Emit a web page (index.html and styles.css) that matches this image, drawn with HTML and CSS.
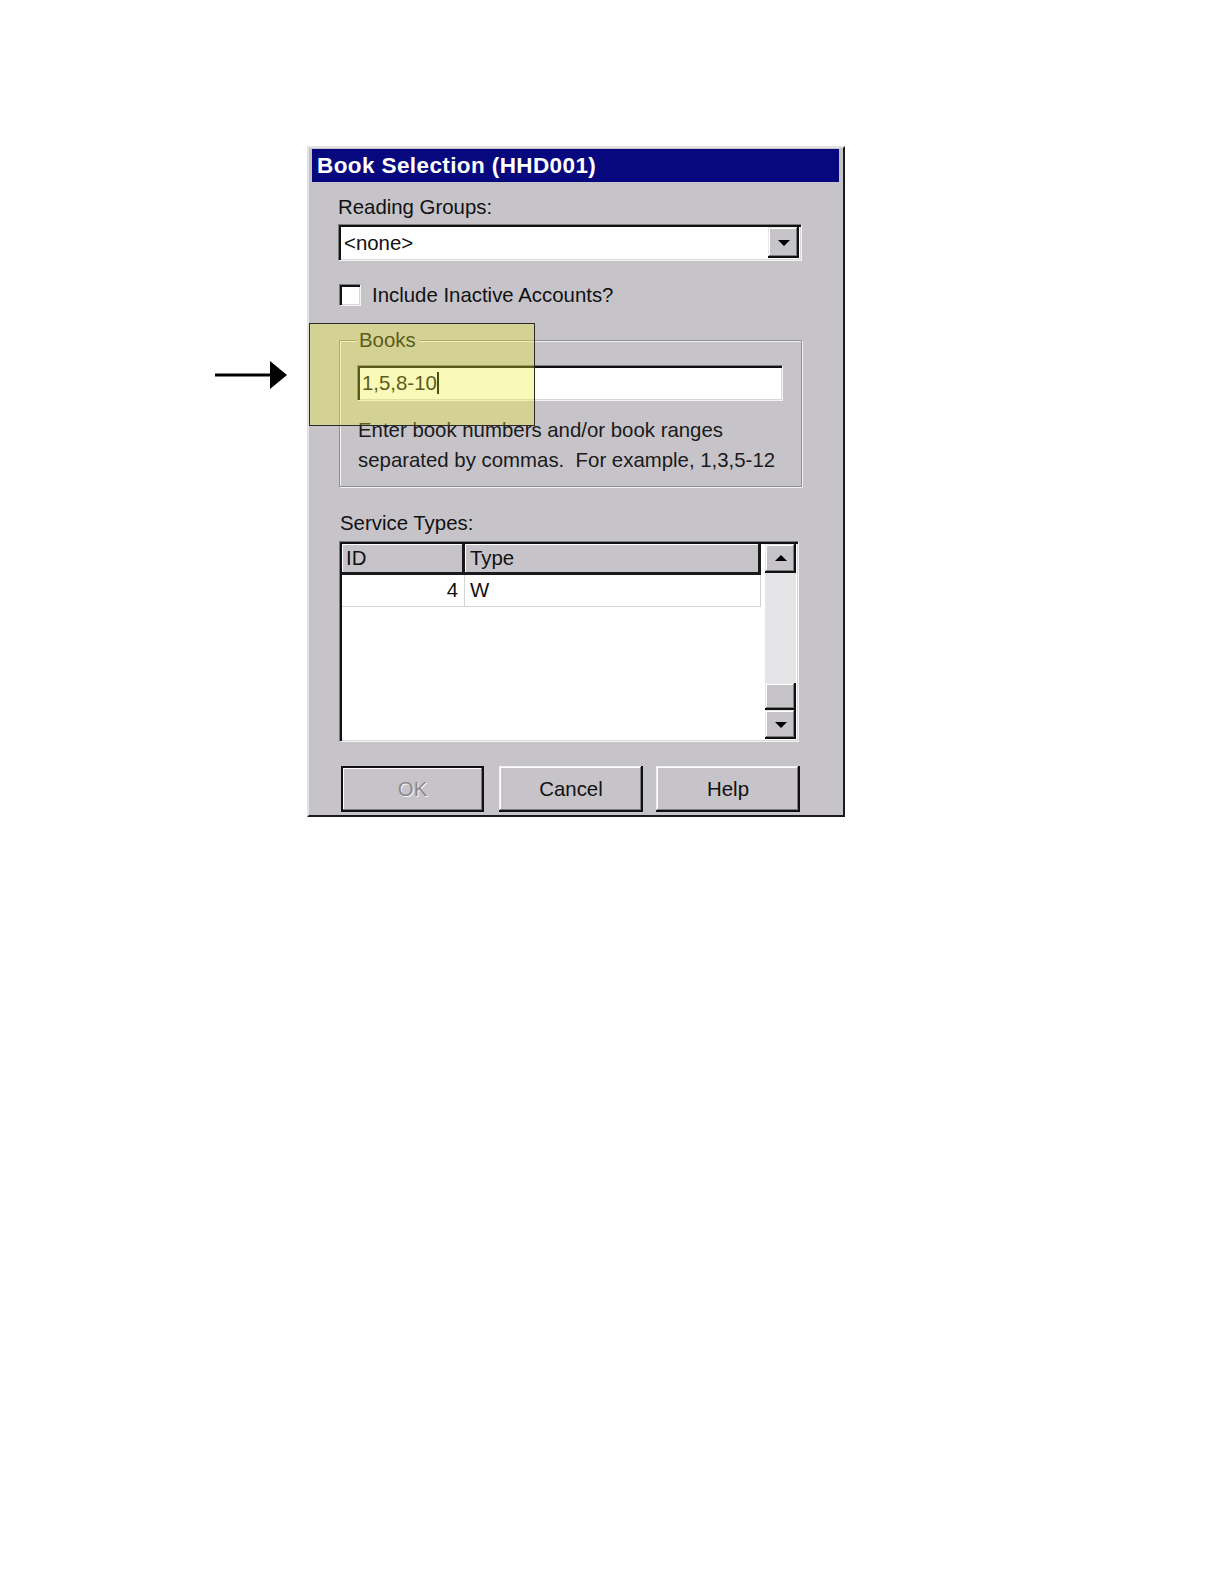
FILE: index.html
```html
<!DOCTYPE html>
<html>
<head>
<meta charset="utf-8">
<title>Book Selection</title>
<link rel="stylesheet" href="styles.css">
</head>
<body>
<div class="page">
  <div class="dialog">
    <div class="titlebar">Book Selection (HHD001)</div>
    <div class="content">
      <div class="label">Reading Groups:</div>
      <div class="combo">
        <span class="combo-text">&lt;none&gt;</span>
        <span class="combo-btn"><span class="tri-down"></span></span>
      </div>
      <div class="check-row">
        <span class="checkbox"></span>
        <span class="check-label">Include Inactive Accounts?</span>
      </div>
      <fieldset class="group">
        <legend class="legend">Books</legend>
        <div class="textbox"><span>1,5,8-10</span><span class="caret"></span></div>
        <p class="help">Enter book numbers and/or book ranges<br>separated by commas.&nbsp; For example, 1,3,5-12</p>
      </fieldset>
      <div class="label label-service">Service Types:</div>
      <div class="listbox">
        <div class="list-main">
          <div class="list-header">
            <div class="hcell hcell-id">ID</div>
            <div class="hcell hcell-type">Type</div>
          </div>
          <div class="list-row">
            <div class="cell cell-id">4</div>
            <div class="cell cell-type">W</div>
          </div>
        </div>
        <div class="scrollbar">
          <div class="sb-btn"><span class="tri-up"></span></div>
          <div class="sb-track"></div>
          <div class="sb-thumb"></div>
          <div class="sb-btn"><span class="tri-down"></span></div>
        </div>
      </div>
      <div class="buttons">
        <div class="btn btn-default"><span class="btn-inner disabled">OK</span></div>
        <div class="btn btn-cancel"><span class="btn-inner">Cancel</span></div>
        <div class="btn btn-help"><span class="btn-inner">Help</span></div>
      </div>
    </div>
  </div>

  <svg class="arrow" width="75" height="30" viewBox="0 0 75 30">
    <rect x="0" y="13.5" width="59" height="3" fill="#000"/>
    <polygon points="55,1 72,15 55,29" fill="#000"/>
  </svg>
  <div class="highlight"></div>
</div>
</body>
</html>
```

FILE: styles.css
```css
html, body {
  margin: 0;
  padding: 0;
  background: #ffffff;
}

.page {
  position: relative;
  width: 1224px;
  height: 1584px;
  box-sizing: border-box;
  padding: 146px 0 0 307px;
  font-family: "Liberation Sans", Arial, sans-serif;
  font-size: 20.4px;
  color: #111;
  overflow: hidden;
}

.dialog {
  width: 538px;
  box-sizing: border-box;
  background: #c7c4c9;
  border-top: 2px solid #e4e2e6;
  border-left: 2px solid #e4e2e6;
  border-right: 2px solid #1a1a1a;
  border-bottom: 2px solid #1a1a1a;
  padding: 1px 4px 3px 3px;
}

.titlebar {
  height: 33px;
  line-height: 33px;
  background: #08087e;
  color: #fff;
  font-weight: bold;
  font-size: 22.5px;
  letter-spacing: 0.4px;
  padding-left: 5px;
  white-space: nowrap;
}

.content {
  display: flex;
  flex-direction: column;
  padding: 0 37px 0 26px;
}

.label {
  margin-top: 14px;
  height: 22px;
  line-height: 22px;
  white-space: nowrap;
}

/* combo box */
.combo {
  margin-top: 6px;
  height: 37px;
  box-sizing: border-box;
  background: #fff;
  border: 1px solid;
  border-color: #7c7c7c #f4f4f4 #f4f4f4 #7c7c7c;
  box-shadow: inset 2px 2px 0 #111, inset -1px -1px 0 #d8d8d8;
  display: flex;
  align-items: center;
  justify-content: space-between;
  padding: 2px 2px 2px 5px;
}

.combo-text {
  line-height: 22px;
}

.combo-btn {
  width: 31px;
  height: 31px;
  box-sizing: border-box;
  background: #c7c4c9;
  box-shadow: inset -2px -2px 0 #111, inset 1px 1px 0 #e8e8e8, inset -3px -3px 0 #7c7c7c, inset 2px 2px 0 #fff;
  display: flex;
  align-items: center;
  justify-content: center;
}

.tri-down {
  width: 0;
  height: 0;
  border-left: 6px solid transparent;
  border-right: 6px solid transparent;
  border-top: 6px solid #000;
}

.tri-up {
  width: 0;
  height: 0;
  border-left: 6px solid transparent;
  border-right: 6px solid transparent;
  border-bottom: 6px solid #000;
}

/* checkbox */
.check-row {
  margin-top: 23px;
  margin-left: 1px;
  height: 22px;
  display: flex;
  align-items: center;
}

.checkbox {
  width: 22px;
  height: 22px;
  box-sizing: border-box;
  background: #fff;
  border: 1px solid;
  border-color: #7c7c7c #f4f4f4 #f4f4f4 #7c7c7c;
  box-shadow: inset 2px 2px 0 #111, inset -1px -1px 0 #d8d8d8;
}

.check-label {
  margin-left: 11px;
  line-height: 22px;
  white-space: nowrap;
}

/* group box */
.group {
  margin: 23px 0 0 1px;
  padding: 14px 17px 11px 17px;
  border: 1px solid #8e8e8e;
  box-shadow: inset 1px 1px 0 #f2f2f2, 1px 1px 0 #f2f2f2;
  min-width: 0;
}

.legend {
  padding: 0 3px 0 2px;
  line-height: 22px;
  background: #c7c4c9;
}

.textbox {
  height: 36px;
  width: 426px;
  box-sizing: border-box;
  background: #fff;
  border: 1px solid;
  border-color: #7c7c7c #f4f4f4 #f4f4f4 #7c7c7c;
  box-shadow: inset 2px 2px 0 #111, inset -1px -1px 0 #d8d8d8;
  display: flex;
  align-items: center;
  padding-left: 4px;
}

.caret {
  display: inline-block;
  width: 2px;
  height: 22px;
  background: #000;
}

.help {
  margin: 15px 0 0 1px;
  line-height: 29.5px;
  white-space: nowrap;
  color: #1a1a1a;
}

.label-service {
  margin-top: 25px;
  margin-left: 2px;
}

/* list view */
.listbox {
  margin: 7px 0 0 1px;
  width: 460px;
  height: 201px;
  box-sizing: border-box;
  background: #fff;
  border: 1px solid;
  border-color: #7c7c7c #f4f4f4 #f4f4f4 #7c7c7c;
  box-shadow: inset 2px 2px 0 #111, inset -1px -1px 0 #d8d8d8;
  padding: 2px;
  display: flex;
}

.list-main {
  flex: 1;
  display: flex;
  flex-direction: column;
  margin-right: 4px;
}

.list-header {
  display: flex;
  height: 31px;
}

.hcell {
  box-sizing: border-box;
  height: 31px;
  line-height: 28px;
  background: #c7c4c9;
  box-shadow: inset -3px -3px 0 #1a1a1a, inset 1px 1px 0 #fff;
  padding-left: 4px;
}

.hcell-id {
  width: 123px;
}

.hcell-type {
  width: 296px;
  padding-left: 5px;
}

.list-row {
  display: flex;
  height: 32px;
}

.cell {
  box-sizing: border-box;
  height: 32px;
  line-height: 30px;
  border-right: 1px solid #d4d4d4;
  border-bottom: 1px solid #d4d4d4;
}

.cell-id {
  width: 123px;
  text-align: right;
  padding-right: 6px;
}

.cell-type {
  width: 296px;
  padding-left: 5px;
}

.scrollbar {
  width: 31px;
  display: flex;
  flex-direction: column;
}

.sb-btn {
  height: 29px;
  box-sizing: border-box;
  background: #c7c4c9;
  box-shadow: inset -2px -2px 0 #111, inset 1px 1px 0 #e8e8e8, inset -3px -3px 0 #7c7c7c, inset 2px 2px 0 #fff;
  display: flex;
  align-items: center;
  justify-content: center;
}

.sb-track {
  height: 111px;
  background: #e4e3e6;
}

.sb-thumb {
  height: 27px;
  background: #c7c4c9;
  box-shadow: inset -2px -2px 0 #111, inset 1px 1px 0 #e8e8e8, inset -3px -3px 0 #7c7c7c, inset 2px 2px 0 #fff;
}

/* buttons */
.buttons {
  margin: 24px 0 0 3px;
  display: flex;
  height: 46px;
}

.btn {
  box-sizing: border-box;
  height: 46px;
  background: #c7c4c9;
  display: flex;
}

.btn-inner {
  flex: 1;
  display: flex;
  align-items: center;
  justify-content: center;
  box-shadow: inset -2px -2px 0 #111, inset 1px 1px 0 #f0f0f0, inset -3px -3px 0 #7c7c7c, inset 2px 2px 0 #fff;
}

.btn-default {
  width: 143px;
  border: 2px solid #111;
}

.btn-default .btn-inner {
  box-shadow: inset -1px -1px 0 #7c7c7c, inset 1px 1px 0 #fff;
}

.disabled {
  color: #8a8a8a;
  text-shadow: 1px 1px 0 #f4f4f4;
}

.btn-cancel {
  width: 144px;
  margin-left: 15px;
}

.btn-help {
  width: 144px;
  margin-left: 13px;
}

/* annotation overlays */
.arrow {
  position: absolute;
  left: 215px;
  top: 360px;
}

.highlight {
  position: absolute;
  left: 309px;
  top: 323px;
  width: 226px;
  height: 103px;
  box-sizing: border-box;
  border: 1px solid #2a2a2a;
  background: rgba(236, 236, 40, 0.33);
}
```
